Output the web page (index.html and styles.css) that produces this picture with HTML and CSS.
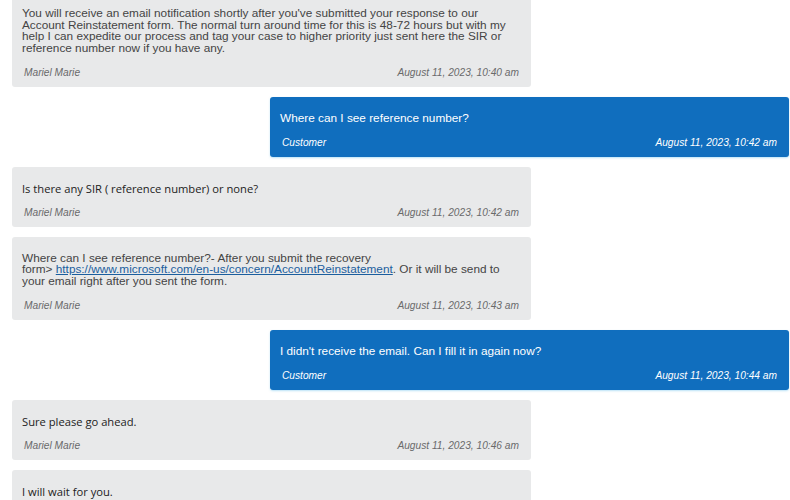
FILE: index.html
```html
<!DOCTYPE html>
<html lang="en">
<head>
<meta charset="utf-8">
<title>Chat transcript</title>
<link rel="stylesheet" href="styles.css">
</head>
<body>
<div class="chat">
  <div class="msg agent">
    <div class="body">You will receive an email notification shortly after you've submitted your response to our<br>Account Reinstatement form. The normal turn around time for this is 48-72 hours but with my<br>help I can expedite our process and tag your case to higher priority just sent here the SIR or<br>reference number now if you have any.</div>
    <div class="meta"><span>Mariel Marie</span><span>August 11, 2023, 10:40 am</span></div>
  </div>
  <div class="msg customer">
    <div class="body">Where can I see reference number?</div>
    <div class="meta"><span>Customer</span><span>August 11, 2023, 10:42 am</span></div>
  </div>
  <div class="msg agent">
    <div class="body alt">Is there any SIR ( reference number) or none?</div>
    <div class="meta"><span>Mariel Marie</span><span>August 11, 2023, 10:42 am</span></div>
  </div>
  <div class="msg agent">
    <div class="body">Where can I see reference number?- After you submit the recovery<br>form&gt; <a class="link" href="#">https://www.microsoft.com/en-us/concern/AccountReinstatement</a>. Or it will be send to<br>your email right after you sent the form.</div>
    <div class="meta"><span>Mariel Marie</span><span>August 11, 2023, 10:43 am</span></div>
  </div>
  <div class="msg customer">
    <div class="body">I didn't receive the email. Can I fill it in again now?</div>
    <div class="meta"><span>Customer</span><span>August 11, 2023, 10:44 am</span></div>
  </div>
  <div class="msg agent">
    <div class="body alt">Sure please go ahead.</div>
    <div class="meta"><span>Mariel Marie</span><span>August 11, 2023, 10:46 am</span></div>
  </div>
  <div class="msg agent">
    <div class="body alt">I will wait for you.</div>
    <div class="meta"><span>Mariel Marie</span><span>August 11, 2023, 10:47 am</span></div>
  </div>
</div>
</body>
</html>
```
FILE: styles.css
```css
html, body {
  margin: 0;
  padding: 0;
  background: #ffffff;
  overflow: hidden;
}

body {
  font-family: "Liberation Sans", Arial, sans-serif;
}

.chat {
  display: flex;
  flex-direction: column;
  gap: 9.5px;
  margin-top: -8px;
  padding: 0 1px 0 12px;
}

.msg {
  width: 519px;
  box-sizing: border-box;
  padding: 16px 12px 8px 10px;
  border-radius: 3px;
}

.agent {
  align-self: flex-start;
  background: #e8e9ea;
  color: #444444;
}

.customer {
  align-self: flex-end;
  background: #106ebe;
  color: #ffffff;
  box-shadow: 0 1px 2px rgba(120, 200, 240, 0.5);
}

.body {
  font-size: 11.8px;
  line-height: 11.5px;
}

.body.alt {
  font-family: "Open Sans", "Noto Sans", sans-serif;
  font-size: 11.2px;
  color: #222222;
}

.link {
  color: #1b5e9e;
  text-decoration: underline;
}

.meta {
  display: flex;
  justify-content: space-between;
  margin-top: 13px;
  padding-left: 2px;
  font-size: 10.2px;
  line-height: 12px;
  font-style: italic;
  color: #6a6a6a;
}

.customer .meta {
  color: #ffffff;
}
```
